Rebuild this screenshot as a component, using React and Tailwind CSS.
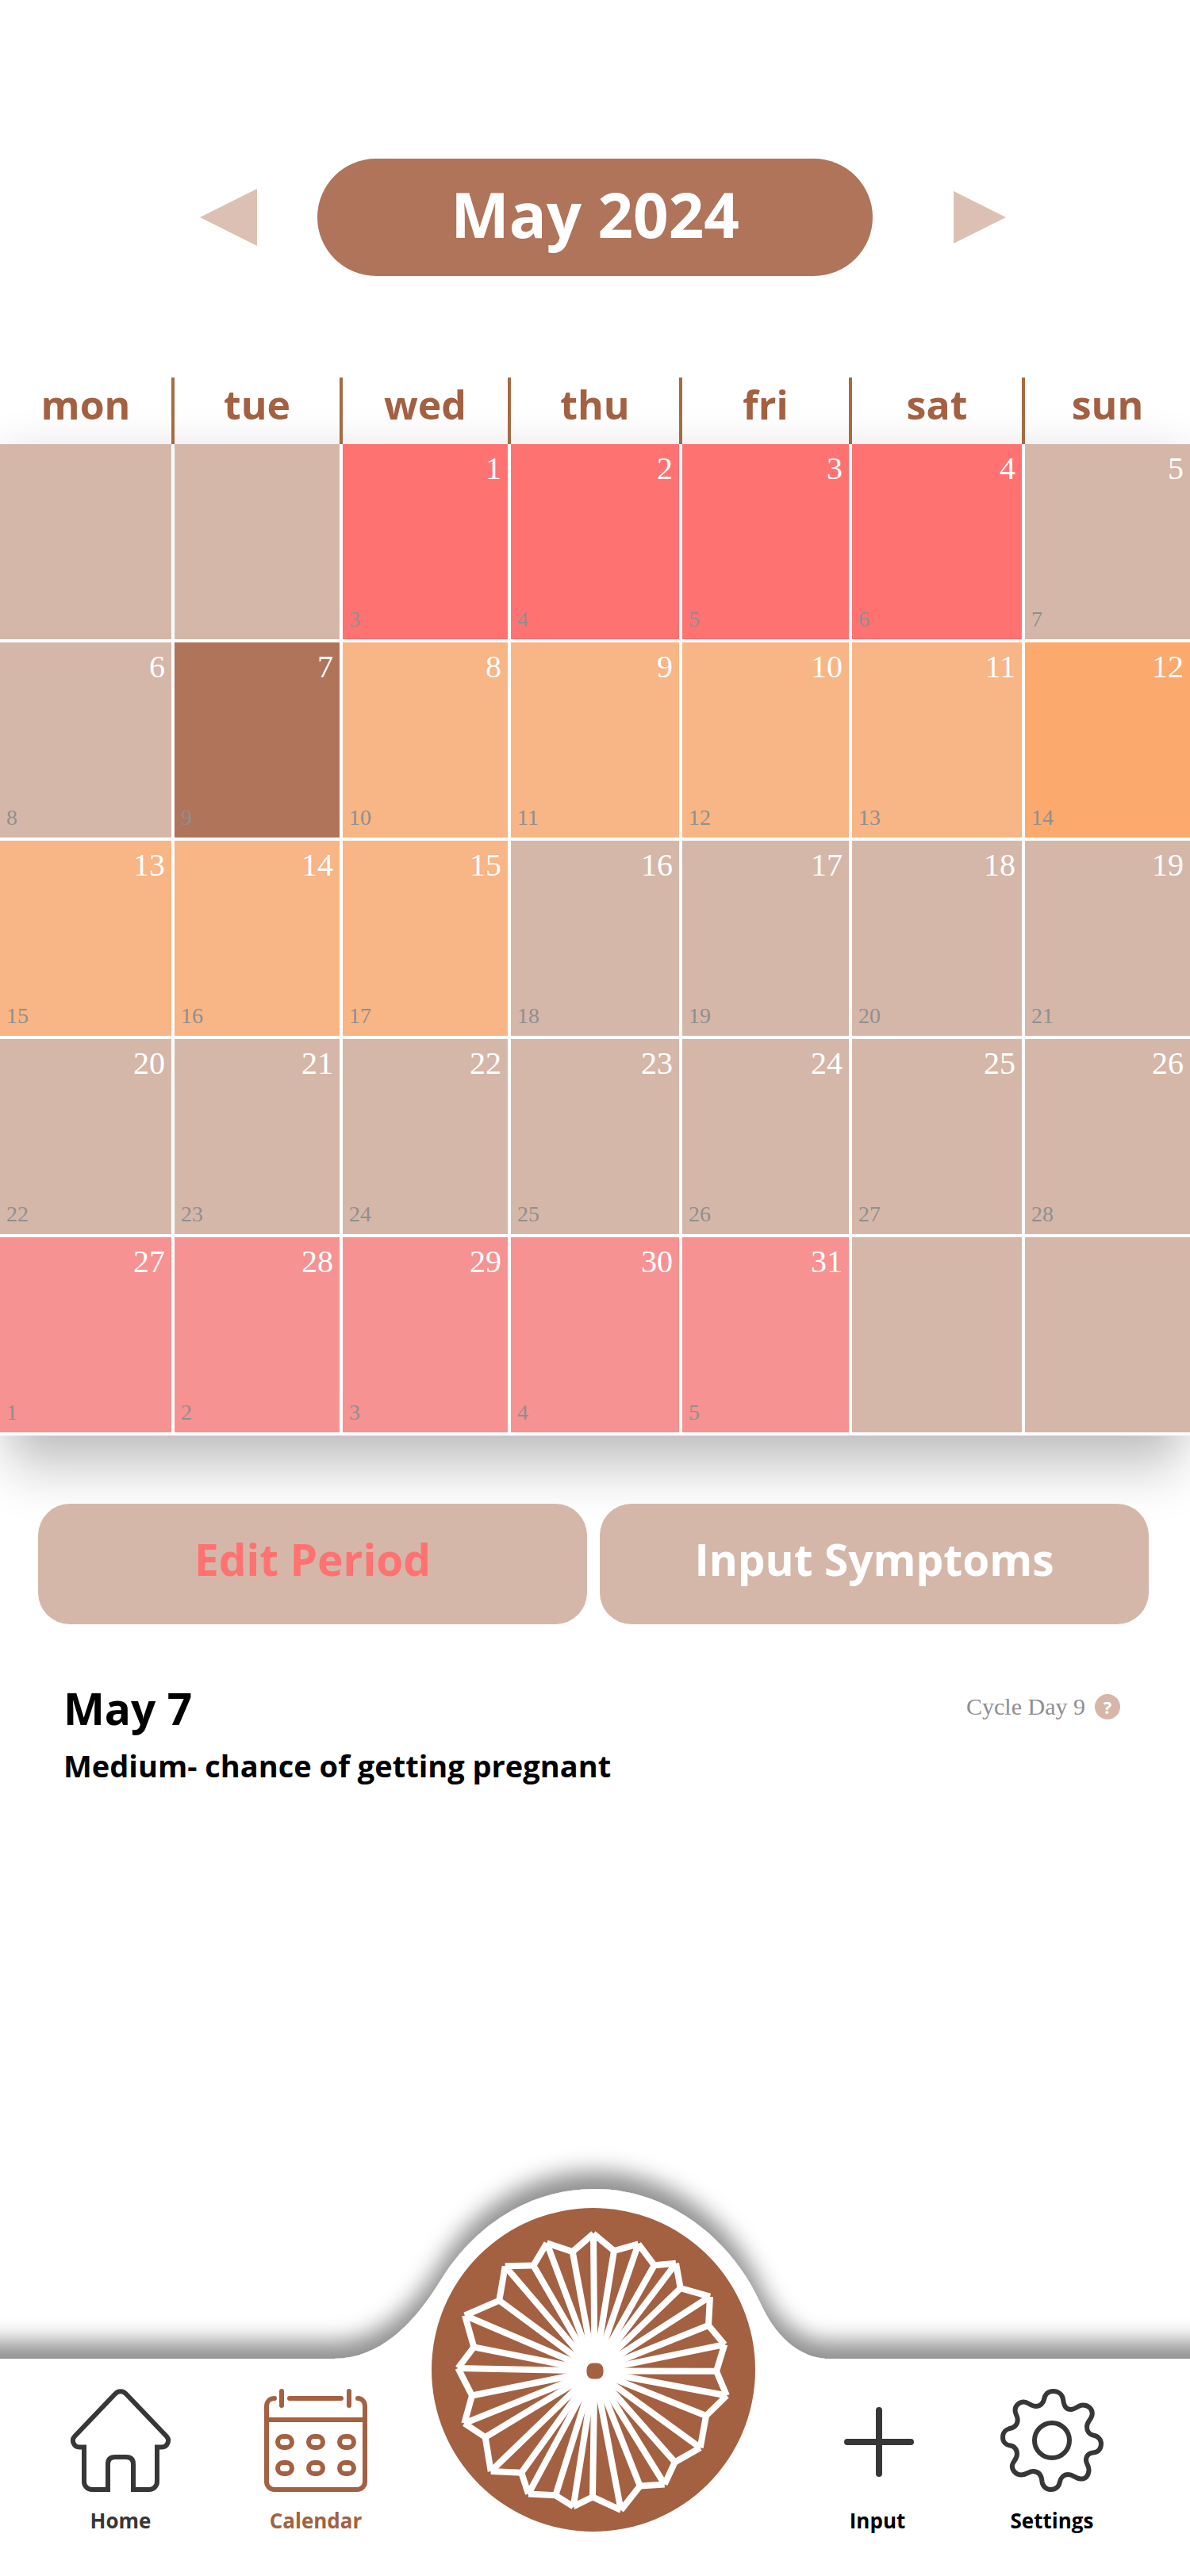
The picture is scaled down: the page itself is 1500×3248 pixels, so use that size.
import React from 'react';
import clsx from 'clsx';

const WEEKDAYS = ['mon', 'tue', 'wed', 'thu', 'fri', 'sat', 'sun'];

const WEEKS = [
  [null, null, 1, 2, 3, 4, 5],
  [6, 7, 8, 9, 10, 11, 12],
  [13, 14, 15, 16, 17, 18, 19],
  [20, 21, 22, 23, 24, 25, 26],
  [27, 28, 29, 30, 31, null, null],
];

const ROW_GRID = 'grid grid-cols-[220fr_212fr_212fr_216fr_214fr_218fr_208fr]';

// The next cycle starts on the 27th
const getCycleDay = (day) => (day < 27 ? day + 2 : day - 26);

const getDayColor = (day) => {
  if (day === 7) return 'bg-[#af745a]';
  if (day === 12) return 'bg-[#fba96c]';
  if (day >= 1 && day <= 4) return 'bg-[#ff7272]';
  if (day >= 8 && day <= 15) return 'bg-[#f8b585]';
  if (day >= 27) return 'bg-[#f79292]';
  return 'bg-[#d5b7a9]';
};

const MonthHeader = () => (
  <header className="grid grid-cols-[1fr_700px_1fr] items-center pt-[200px]">
    <button type="button" aria-label="Previous month" className="mr-[76px] justify-self-end text-[#dcc0b4]">
      <svg width="72" height="72" viewBox="0 0 72 72" fill="currentColor">
        <path d="M0 36L72 0V72Z" />
      </svg>
    </button>
    <h1 className="flex h-[148px] items-center justify-center rounded-full bg-[#af745a] pb-2 text-[78px] font-bold text-white">
      May 2024
    </h1>
    <button type="button" aria-label="Next month" className="ml-[102px] justify-self-start text-[#dcc0b4]">
      <svg width="66" height="66" viewBox="0 0 66 66" fill="currentColor">
        <path d="M66 33L0 0V66Z" />
      </svg>
    </button>
  </header>
);

const DayCell = ({ day }) => (
  <td
    className={clsx(
      'flex h-[250px] flex-col justify-between border-r-4 border-b-4 border-white px-2 py-[11px] last:border-r-0',
      getDayColor(day)
    )}
  >
    {day && (
      <>
        <span className="text-right text-[40px] leading-[40px] text-white">{day}</span>
        <span className="text-[28px] leading-[28px] text-[#8f8f8f]">{getCycleDay(day)}</span>
      </>
    )}
  </td>
);

const Calendar = () => (
  <table className="mt-32 block">
    <thead className="block">
      <tr className={ROW_GRID}>
        {WEEKDAYS.map((name) => (
          <th
            key={name}
            scope="col"
            className="flex h-[84px] items-center justify-center border-r-4 border-[#a56b42] pb-4 text-[50px] font-bold text-[#a36142] last:border-r-0"
          >
            {name}
          </th>
        ))}
      </tr>
    </thead>
    <tbody className="block font-['Liberation_Serif',serif] shadow-[0_57px_60px_-12px_rgba(0,0,0,0.2),0_0_50px_-4px_rgba(0,0,0,0.12)]">
      {WEEKS.map((week, i) => (
        <tr key={i} className={ROW_GRID}>
          {week.map((day, j) => (
            <DayCell key={j} day={day} />
          ))}
        </tr>
      ))}
    </tbody>
  </table>
);

const ActionButton = ({ children, className }) => (
  <button
    type="button"
    className={clsx('flex h-[152px] flex-1 items-center justify-center rounded-[40px] bg-[#d5b7a9] pb-3 text-[55px] font-bold', className)}
  >
    {children}
  </button>
);

const DaySummary = () => (
  <section className="mt-[74px] pr-[88px] pl-20">
    <div className="flex items-start justify-between">
      <h2 className="text-[55px] leading-[64px] font-bold">May 7</h2>
      <div className="flex items-center gap-3">
        <span className="font-['Liberation_Serif',serif] text-[30px] leading-[60px] text-[#8f8f8f]">Cycle Day 9</span>
        <button
          type="button"
          aria-label="About cycle days"
          className="flex size-8 items-center justify-center rounded-full bg-[#d5b7a9] text-[22px] font-bold text-white"
        >
          ?
        </button>
      </div>
    </div>
    <p className="mt-[10px] text-[38px] leading-[60px] font-bold">Medium- chance of getting pregnant</p>
  </section>
);

const HomeIcon = () => (
  <svg width="126" height="130" viewBox="0 0 126 130" fill="none" stroke="#373737" strokeWidth="6">
    <path d="M20 73.5H11C4 73.5 .5 65 5 60L56 6.500C60 2 66 2 70 6.500L121 60C125.500 65 122 73.500 115 73.500H106" />
    <path d="M17 71V117a10 10 0 0 0 10 10H50M109 71V117a10 10 0 0 1-10 10H76" />
    <path d="M47 130V95q0-9 9-9H70q9 0 9 9V130" />
  </svg>
);

const CalendarIcon = () => (
  <svg width="130" height="130" viewBox="0 0 130 130" fill="none" stroke="#a36142" strokeWidth="6" strokeLinecap="round">
    <path d="M13 12C7 12 3 16 3 22V117a10 10 0 0 0 10 10H117a10 10 0 0 0 10-10V22C127 16 123 12 118 12" />
    <path d="M22 3V21M107 3V21M32 12H97M4 39H126" />
    {[67, 100].map((y) =>
      [26, 65, 104].map((x) => <rect key={`${x}-${y}`} x={x - 9} y={y - 7} width="18" height="14" rx="7" />)
    )}
  </svg>
);

const PlusIcon = () => (
  <svg width="130" height="130" viewBox="0 0 130 130" fill="none" stroke="#373737" strokeWidth="8" strokeLinecap="round">
    <path d="M27 67H107M67 27V107" />
  </svg>
);

const GearIcon = () => (
  <svg width="130" height="130" viewBox="0 0 130 130" fill="none" stroke="#373737" strokeWidth="6">
    <path d="M66.500 3C73 3 78 7 79 13C80 21 82 26 89 26C95 26 98 20.600 104 20.600C111 20.600 117 26 115.500 33C114.500 39 109 41 109 48C109 53 112 57.500 117 58.500C123 59.500 127 64 127 69C127 76 123 80 117 80.500C111 81 108 85 108 90C108 95 112 97 111.500 103C111 110 107 114 101 113.500C94 113 92 108 85.400 108C80 108 76 112 75 117C74 123 70 127 63.400 127C57 127 53 122 52.500 117C52 110 49 104 41 104C36 104 33 108.500 26.500 108.500C19 108.500 14 102 15 96C16 91 21 89 21 82C21 76 17 72 12.500 71.500C7 71 3 67 3 61C3 55 7 51 12 50C18 49 21.700 45 21.700 39C21.700 34 18.500 32 18.500 27C18.500 21 24 16.500 29.500 16.500C35 16.500 38 22 44.800 22C50 22 54 18 55 13.500C56 7 60 3 66.500 3Z" />
    <circle cx="65" cy="65" r="22" />
  </svg>
);

// Rim of the flower, clockwise from the top petal
const PETALS = [
  [204, 32.4], [230, 54], [260.7, 45.3], [280.7, 72.2], [308, 69.8], [313.7, 101.2], [351, 111.7],
  [349, 148], [369.3, 172.2], [359, 205.8], [372, 236.5], [346, 262], [338.7, 302.2], [306.7, 320.4],
  [293.7, 348.4], [262.7, 350.5], [238.7, 380.9], [203, 364.4], [178.7, 376.3], [156.3, 362.3],
  [122, 360.6], [113.3, 333.7], [74.7, 332], [67.7, 289], [41.3, 271.5], [51, 236.5], [33.3, 201.9],
  [53.3, 175.3], [42, 135.5], [85.3, 116.6], [92.7, 73.3], [128.3, 72.6], [145.3, 44.3], [177.7, 55.1],
];

const FlowerLogo = () => (
  <svg width="408" height="408" viewBox="0 0 408 408">
    <circle cx="204" cy="204" r="204" fill="#a36142" />
    <g stroke="#fff" strokeWidth="8">
      {PETALS.map(([x, y], i) => {
        const [nextX, nextY] = PETALS[(i + 1) % PETALS.length];
        return <path key={i} d={`M205.500 205.500L${x} ${y}M${x} ${y}L${nextX} ${nextY}`} />;
      })}
    </g>
    <rect x="195.500" y="195.500" width="21" height="20" rx="8" fill="#a36142" />
  </svg>
);

const NavItem = ({ label, icon, className }) => (
  <a href="#" className={clsx('flex flex-col items-center gap-[18px] text-[26px] leading-[36px] font-bold', className)}>
    {icon}
    {label}
  </a>
);

const BottomNav = () => (
  <footer className="relative mt-auto overflow-x-clip">
    <svg
      className="absolute bottom-0 left-0 h-[568px] w-full overflow-visible"
      viewBox="0 0 1500 568"
      preserveAspectRatio="xMidYMax meet"
      aria-hidden="true"
    >
      <defs>
        <filter id="nav-shadow" filterUnits="userSpaceOnUse" x="-600" y="0" width="2700" height="568">
          <feDropShadow dx="0" dy="-22" stdDeviation="14" floodColor="#000" floodOpacity="0.43" />
        </filter>
      </defs>
      <path
        filter="url(#nav-shadow)"
        fill="#fff"
        d="M-600 294H421C480 294 523 248 555 196C600 123 670 80 750 80C840 80 920 140 958 223C976 263 1005 294 1046 294H2100V640H-600Z"
      />
    </svg>
    <nav className="relative grid grid-cols-[304fr_188fr_512fr_204fr_236fr] items-end pr-14 pb-[52px]">
      <NavItem label="Home" icon={<HomeIcon />} className="text-[#373737]" />
      <NavItem label="Calendar" icon={<CalendarIcon />} className="text-[#a36142]" />
      <a href="#" aria-label="Today" className="mb-1 justify-self-center">
        <FlowerLogo />
      </a>
      <NavItem label="Input" icon={<PlusIcon />} />
      <NavItem label="Settings" icon={<GearIcon />} />
    </nav>
  </footer>
);

const App = () => (
  <div className="flex min-h-screen flex-col bg-white font-['Open_Sans',sans-serif] text-black">
    <MonthHeader />
    <Calendar />
    <div className="relative mt-[86px] flex gap-4 pr-[52px] pl-12">
      <ActionButton className="text-[#ff7272]">Edit Period</ActionButton>
      <ActionButton className="text-white">Input Symptoms</ActionButton>
    </div>
    <DaySummary />
    <BottomNav />
  </div>
);

export default App;
